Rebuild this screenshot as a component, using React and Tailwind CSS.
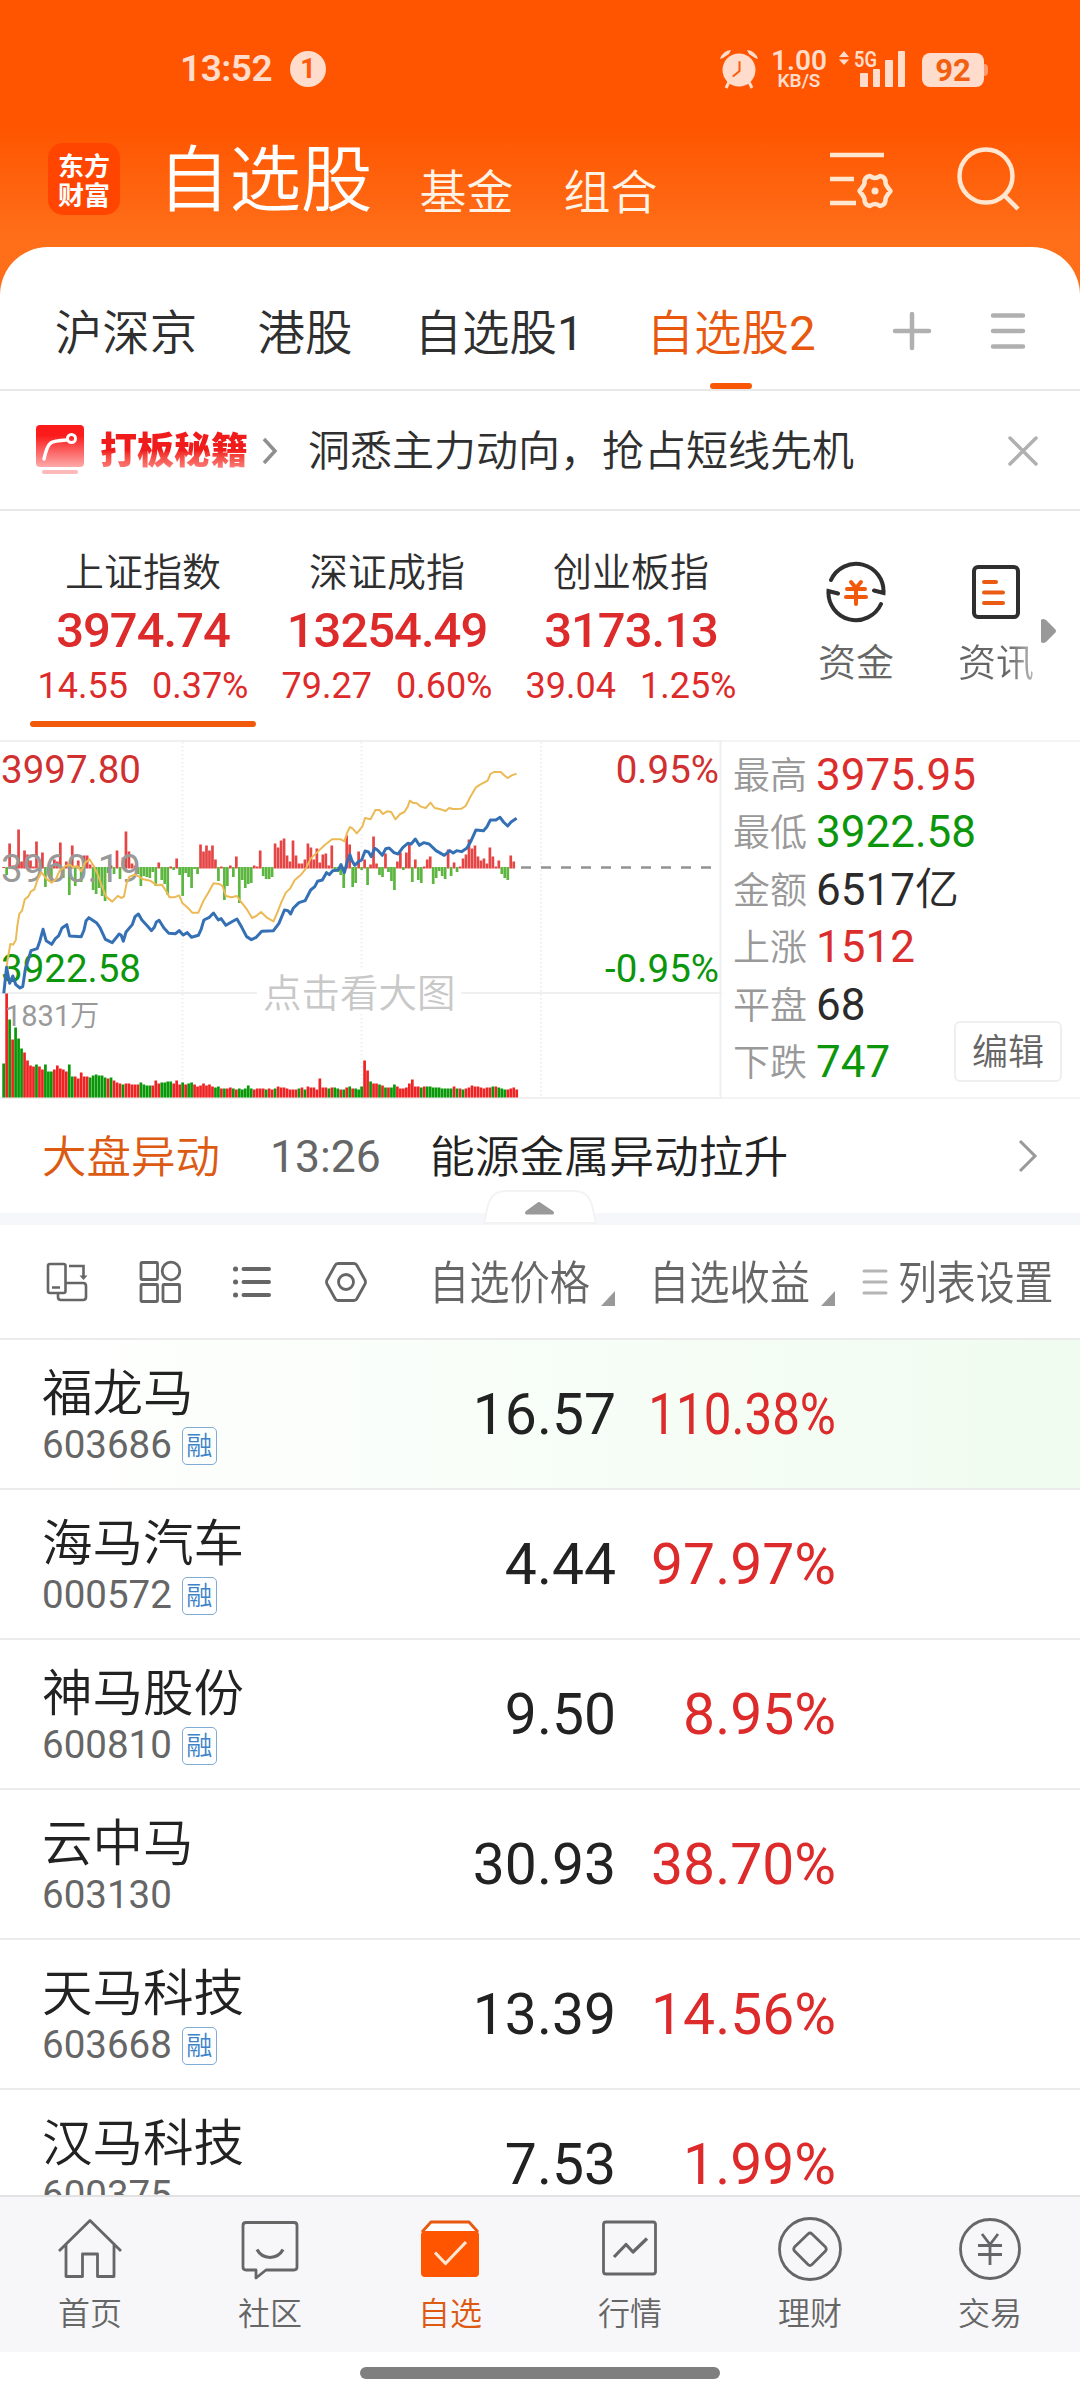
import clsx from 'clsx';

const TABS = [
    { label: '沪深京', box: 'w-[142px]' },
    { label: '港股', box: 'w-[96px]' },
    { label: '自选股', suffix: '1', box: 'w-[168px]' },
    { label: '自选股', suffix: '2', box: 'w-[168px]', active: true },
];

const INDEXES = [
    { name: '上证指数', value: '3974.74', diff: '14.55', pct: '0.37%', active: true },
    { name: '深证成指', value: '13254.49', diff: '79.27', pct: '0.60%' },
    { name: '创业板指', value: '3173.13', diff: '39.04', pct: '1.25%' },
];

const STATS = [
    { label: '最高', value: '3975.95', color: 'text-[#dc2d2d]' },
    { label: '最低', value: '3922.58', color: 'text-[#0b960b]' },
    { label: '金额', value: '6517', unit: '亿', color: 'text-[#2b2b2b]' },
    { label: '上涨', value: '1512', color: 'text-[#dc2d2d]' },
    { label: '平盘', value: '68', color: 'text-[#2b2b2b]' },
    { label: '下跌', value: '747', color: 'text-[#0b960b]' },
];

const STOCKS = [
    { name: '福龙马', code: '603686', margin: true, price: '16.57', pct: '110.38%', highlight: true },
    { name: '海马汽车', code: '000572', margin: true, price: '4.44', pct: '97.97%' },
    { name: '神马股份', code: '600810', margin: true, price: '9.50', pct: '8.95%' },
    { name: '云中马', code: '603130', margin: false, price: '30.93', pct: '38.70%' },
    { name: '天马科技', code: '603668', margin: true, price: '13.39', pct: '14.56%' },
    { name: '汉马科技', code: '600375', margin: false, price: '7.53', pct: '1.99%' },
];

// minute by minute strength around the zero line
const MOMENTUM = [
    0, -7, 24, 2, 1, 38, 6, 17, 13, 7, 1, 26, -3, 15, -19, -4, -15, 8, 6, 25, -10, 6, -27, 22, -18, 7, -14, 12, 12, 3,
    -22, -26, -20, -28, -33, -5, 2, -6, 17, -11, 10, 36, 16, 4, 2, -6, -18, -8, -9, -10, -4, -18, 5, -12, -16, -27, 1, -2, 9, -7,
    -28, -5, -9, -20, -1, -6, 23, 16, 22, 17, 22, 8, -13, 1, -32, -18, 2, -9, 11, -35, -12, -20, -16, -15, 2, 1, 17, -8, -11, -11,
    -9, 24, 20, 27, 29, 12, 6, 27, 12, 4, 4, 8, 24, 20, 8, 19, 5, 13, 14, 2, 22, -3, -4, -7, -20, 32, 23, -19, -15, 16,
    -2, 8, -17, 3, 31, 4, -7, -9, 14, -4, -13, -22, 6, 15, -2, 15, 23, -14, 8, -12, -15, 1, 8, 11, -16, -10, -3, -8, -11, 18,
    -8, 5, -4, 1, 9, 13, 28, 19, 22, 11, 7, 9, 4, 20, 11, 1, 7, -6, -10, -12, 12, 6,
];

// positive: up minute (red), negative: down minute (green)
const VOLUME = [
    -34, 104, -78, 58, -70, -59, -49, 45, 37, 32, 31, -33, 31, 28, -33, -26, -26, 28, 32, 29, 28, 26, -33, -21, 21, 19, 25, 21, 21, -20,
    -22, -23, -22, -22, -20, 19, -20, 17, 15, 14, -13, 14, 14, 13, 13, 13, -15, -13, -12, -12, 12, 17, 14, -15, -15, -16, -16, 14, 17, 13,
    -15, 13, -14, -15, 13, 11, 12, 14, 12, 13, 11, -10, -11, 9, -9, 9, 10, -9, 8, -9, -8, -9, -12, -9, 8, 9, 9, 9, -8, 9,
    8, -9, 11, 10, 10, 9, 8, 8, 8, -9, 10, -8, 11, 10, 10, 8, 19, 10, 10, -9, 10, -10, -9, 8, -8, 10, -11, 9, -9, -8,
    -11, 37, 27, -16, 14, 14, -13, 12, -10, 10, -10, -13, 11, 9, 9, 10, 14, 18, 11, 11, -10, 11, -11, -11, -10, -10, -10, -9, -9, -9,
    -9, 11, -9, 9, -8, 9, 10, 12, 11, 11, 10, 9, 10, 10, -11, 11, -10, -9, -8, 8, 9, 10, 8,
];

const PRICE_LINE =
    '11,790 19,712 28,760 37,738 46,764 58,774 66,770 74,715 82,690 90,662 108,656 116,632 125,598 134,632 150,643 160,627 170,618 180,594 194,584 202,618 236,620 244,600 250,572 258,563 280,578 290,592 306,628 326,638 346,612 352,616 358,634 366,606 384,584 392,560 402,552 412,570 430,590 440,602 448,592 454,576 462,571 476,594 490,610 510,611 520,602 532,615 544,608 556,622 576,616 584,598 592,570 608,562 620,549 634,570 642,566 656,586 672,576 688,567 702,592 716,620 730,629 744,622 760,604 794,602 810,580 826,540 836,542 844,552 852,534 868,518 886,512 902,480 914,470 922,454 936,450 948,428 956,434 966,422 982,420 990,404 1000,428 1008,396 1016,374 1022,392 1030,406 1042,394 1050,390 1060,363 1070,366 1078,380 1088,355 1096,360 1110,376 1120,356 1130,354 1144,368 1156,372 1170,352 1184,340 1194,342 1206,327 1218,346 1230,338 1246,342 1266,362 1290,376 1306,362 1316,369 1326,362 1340,365 1356,354 1368,332 1382,300 1404,302 1414,290 1424,270 1440,270 1452,262 1462,276 1474,288 1484,276 1500,265';

const AVERAGE_LINE =
    '19,712 22,690 30,642 38,644 46,630 50,590 56,552 64,542 72,508 82,500 90,484 100,478 108,452 120,426 134,446 150,458 162,448 172,424 190,408 202,404 212,412 224,408 236,424 246,400 260,388 272,408 284,434 296,468 308,500 326,515 342,498 352,504 360,500 368,458 376,440 392,434 404,440 416,448 436,452 456,466 470,464 484,486 492,502 506,502 520,496 530,520 546,534 558,548 576,548 590,514 606,486 620,460 636,462 646,468 656,498 672,502 688,498 700,516 718,540 732,564 744,558 758,546 776,564 794,574 806,546 818,514 830,488 842,476 856,450 874,434 888,416 902,386 920,368 942,346 964,328 990,328 1000,334 1008,308 1016,291 1024,296 1036,310 1052,290 1060,264 1076,268 1090,240 1102,240 1112,252 1124,244 1136,246 1148,268 1162,252 1174,246 1184,230 1190,212 1198,218 1210,220 1222,230 1236,234 1250,218 1262,234 1280,238 1294,243 1304,234 1316,237 1340,236 1352,228 1366,200 1382,172 1394,164 1416,152 1424,132 1434,126 1454,126 1464,136 1474,144 1486,136 1500,131';

function StatusBar() {
    return (
        <div className="flex h-[136px] items-start pl-[180px] pt-[50px] text-[#ffdccb]">
            <span className="w-[110px] text-[37px] font-semibold leading-[38px] tracking-[-0.5px]">13:52</span>
            <span className="mt-px flex size-9 items-center justify-center rounded-full bg-[#ffdccb] text-[27px] font-bold leading-none text-[#ff5a0a]">1</span>
            <svg className="ml-[394px]" width="38" height="40" viewBox="0 0 38 40" fill="currentColor">
                <path d="M0 9 A12 12 0 0 1 11 0 L9 4 L3 8Z M38 9 A12 12 0 0 0 27 0 L29 4 L35 8Z" />
                <circle cx="19" cy="20" r="16.5" />
                <path d="M9 32 L6 38 M29 32 L32 38" stroke="currentColor" strokeWidth="3" />
                <path d="M19.500 12 V21 L13.500 26" fill="none" stroke="#ff5a0a" strokeWidth="2" strokeLinecap="round" />
            </svg>
            <div className="ml-[13px] flex w-[56px] flex-col items-center font-semibold">
                <span className="text-[28px] leading-[22px]">1.00</span>
                <span className="text-[19px] leading-[18px]">KB/S</span>
            </div>
            <svg className="ml-[12px]" width="68" height="38" viewBox="0 0 68 38" fill="currentColor">
                <path d="M5 1 L10 7 H0Z M5 15 L10 9.500 H0Z" />
                <text x="15" y="16.500" fontSize="22" fontWeight="600" textLength="23" lengthAdjust="spacingAndGlyphs">5G</text>
                <rect x="21" y="23" width="8" height="14" rx="1" />
                <rect x="34" y="19" width="7" height="18" rx="1" />
                <rect x="46" y="10" width="8" height="27" rx="1" />
                <rect x="59" y="1" width="7" height="36" rx="1" />
            </svg>
            <div className="ml-[15px] mt-[3px] flex items-center">
                <span className="flex h-[34px] w-[62px] items-center justify-center rounded-[8px] bg-[#ffdccb] text-[31px] font-bold leading-none text-[#f2600f]">92</span>
                <span className="h-3 w-[4px] rounded-r bg-[#ff9b6c]" />
            </div>
        </div>
    );
}

function AppHeader() {
    return (
        <div className="flex h-[111px] items-start pl-12 text-white">
            <div className="mt-[7px] flex size-[72px] flex-col items-center justify-center rounded-[15px] bg-[#ff4500] font-['Noto_Sans_CJK_SC'] text-[26px] font-bold leading-[29px]">
                <span>东方</span>
                <span>财富</span>
            </div>
            <span className="ml-[38px] mt-[9px] text-[71.500px] leading-[72px]">自选股</span>
            <span className="ml-[47px] mt-[30px] text-[47px] leading-[54px] text-[#fff3e6]">基金</span>
            <span className="ml-[50px] mt-[30px] text-[47px] leading-[54px] text-[#fff3e6]">组合</span>
            <svg className="ml-[172px] mt-[14px]" width="64" height="60" viewBox="0 0 64 60" fill="none" stroke="#ffe6d0" strokeWidth="4.500">
                <path d="M0 5 H54 M0 29 H24 M0 53 H26" />
                <path
                    d="M40 26 Q45 30 50 26 Q56 27 55.500 33 Q56 35.500 60.500 41 Q56 46.500 55.500 49 Q56 55 50 56 Q45 52 40 56 Q34 55 34.500 49 Q34 46.500 29.500 41 Q34 35.500 34.500 33 Q34 27 40 26Z"
                    strokeLinejoin="round"
                />
                <circle cx="45" cy="41" r="3.500" fill="#ffe6d0" stroke="none" />
            </svg>
            <svg className="ml-[63px] mt-[11px]" width="64" height="64" viewBox="0 0 64 64" fill="none" stroke="#ffe6d0" strokeWidth="4.500">
                <circle cx="29" cy="29" r="26.500" />
                <path d="M47 48 L61 62" />
            </svg>
        </div>
    );
}

function GroupTabs() {
    return (
        <div className="flex h-[144px] items-stretch border-b-2 border-[#e8e8e8] pl-[55px] text-[47.5px] leading-none text-[#2f2f2f]">
            {TABS.map((tab, i) => (
                <div
                    key={i}
                    className={clsx('flex flex-col items-center', tab.box, i === 1 && 'ml-[60px]', i === 2 && 'ml-[62px]', i === 3 && 'ml-[64px]', tab.active && 'text-[#e8590f]')}
                >
                    <span className="mt-[64px] whitespace-nowrap">
                        {tab.label}
                        {tab.suffix && <span className="font-normal">{tab.suffix}</span>}
                    </span>
                    {tab.active && <span className="mb-0 mt-auto h-[6px] w-[42px] rounded-full bg-[#f95706]" />}
                </div>
            ))}
            <svg className="ml-[77px] mt-[64px]" width="40" height="40" viewBox="0 0 40 40" stroke="#b0b0b0" strokeWidth="4.500" strokeLinecap="round">
                <path d="M3 20 H37 M20 3 V37" />
            </svg>
            <svg className="ml-[57px] mt-[64px]" width="40" height="40" viewBox="0 0 40 40" stroke="#b0b0b0" strokeWidth="4.500" strokeLinecap="round">
                <path d="M4 4.500 H34 M4 20 H34 M4 35.500 H34" />
            </svg>
        </div>
    );
}

function PromoBanner() {
    return (
        <div className="flex h-[120px] items-center border-b-2 border-[#e8e8e8] pl-[36px] leading-none">
            <svg width="49" height="50" viewBox="0 0 49 50">
                <defs>
                    <linearGradient id="promo" x1="0" y1="0" x2="0" y2="1">
                        <stop offset="0.25" stopColor="#fb1b1b" />
                        <stop offset="1" stopColor="#fdaaaa" />
                    </linearGradient>
                </defs>
                <rect width="48" height="42" rx="4" fill="url(#promo)" />
                <rect x="6" y="45" width="36" height="4" rx="2" fill="#fbb9b9" />
                <path d="M8 34 C12 16 14 16 31 15" fill="none" stroke="#fff" strokeWidth="3.500" strokeLinecap="round" />
                <circle cx="35.500" cy="13.500" r="4" fill="none" stroke="#fff" strokeWidth="3" />
            </svg>
            <span className="ml-[15px] bg-gradient-to-b from-[#f01c1c] from-50% to-[#ff9090] bg-clip-text pb-1 pt-1.5 text-[37px] font-black text-transparent">打板秘籍</span>
            <svg className="ml-[13px] mt-[2px]" width="18" height="30" viewBox="0 0 18 30" fill="none" stroke="#8f8f8f" strokeWidth="3.500">
                <path d="M3 3 L14 15 L3 27" />
            </svg>
            <span className="ml-[29px] mt-[3px] w-[546px] whitespace-nowrap text-[42px] text-[#2f2f2f]">洞悉主力动向，抢占短线先机</span>
            <svg className="ml-[154px] mt-[2px]" width="30" height="32" viewBox="0 0 30 32" fill="none" stroke="#b0b0b0" strokeWidth="3.500" strokeLinecap="round">
                <path d="M2 3 L28 29 M28 3 L2 29" />
            </svg>
        </div>
    );
}

function IndexStrip() {
    return (
        <div className="flex h-[229px] pl-[21px]">
            {INDEXES.map((item) => (
                <div key={item.name} className="flex w-[244px] flex-col items-center whitespace-nowrap font-normal leading-none text-[#dd2a2a]">
                    <span className="mt-[43px] text-[39px] font-[350] text-[#2f2f2f]">{item.name}</span>
                    <span className="mt-[13px] text-[49px] font-medium tracking-[-1px]">{item.value}</span>
                    <span className="mt-[13px] flex gap-[24px] text-[36px]">
                        <span>{item.diff}</span>
                        <span>{item.pct}</span>
                    </span>
                    {item.active && <span className="mb-[13px] mt-auto h-[6px] w-[226px] rounded-full bg-[#f15a0c]" />}
                </div>
            ))}
            <div className="ml-[60px] flex w-[86px] flex-col items-center pt-[50px] text-[38px] leading-none text-[#666]">
                <svg width="62" height="62" viewBox="-31 -31 62 62" fill="none" stroke="#2f2f2f" strokeWidth="4" strokeLinecap="round">
                    <path d="M-25 -12 A27.500 27.500 0 0 1 27.500 1 L18 -1.500" />
                    <path d="M25 12 A27.500 27.500 0 0 1 -27.500 -1 L-18 1.500" />
                    <path d="M-5 -10 L0 -4 L5 -10 M-9 -3 H9 M-10 5 H10 M0 -4 V12" stroke="#f15a0c" />
                </svg>
                <span className="mt-[21px]">资金</span>
            </div>
            <div className="ml-[54px] flex w-[86px] flex-col items-center pt-[50px] text-[38px] leading-none">
                <svg width="50" height="62" viewBox="0 0 50 62" fill="none" stroke="#2f2f2f" strokeWidth="4" strokeLinecap="round">
                    <rect x="3" y="6" width="44" height="50" rx="4" />
                    <path d="M13 21 H25 M13 31.500 H32 M13 42 H32" stroke="#ea5b14" />
                </svg>
                <span className="mt-[21px] bg-gradient-to-r from-[#666] from-65% to-[#bbb] bg-clip-text pb-1 text-transparent">资讯</span>
            </div>
            <svg className="ml-[2px] mt-[107px]" width="16" height="26" viewBox="0 0 16 26" fill="#999">
                <path d="M0 2 Q2 0 5 2 L14 11 Q16 13 14 15 L5 24 Q2 26 0 24Z" />
            </svg>
        </div>
    );
}

function IntradayChart() {
    return (
        <svg className="shrink-0" width="722" height="359" viewBox="0 0 722 359">
            <g stroke="#f0f0f0" strokeWidth="2">
                <path d="M0 1 H722 M0 253 H722 M0 358 H722 M720.500 0 V358" />
                <path d="M182.500 2 V358 M361.500 2 V358 M541 2 V358" strokeDasharray="1.500 2.500" />
            </g>
            {MOMENTUM.map((v, i) => (
                <rect key={i} x={2.3 + i * 2.983} y={v > 0 ? 127.5 - v : 127} width="2.700" height={Math.abs(v) + 1} fill={v >= 0 ? '#e64545' : '#5cb63f'} />
            ))}
            {VOLUME.map((v, i) => (
                <rect key={i} x={2.3 + i * 2.983} y={357.5 - Math.abs(v)} width="2.700" height={Math.abs(v)} fill={v > 0 ? '#ee2424' : '#089808'} />
            ))}
            <path d="M521 127.500 H712" stroke="#929292" strokeWidth="2.500" strokeDasharray="10 10" />
            <g fontSize="38.500" fontWeight="400">
                <text x="1" y="43" fill="#d03030">3997.80</text>
                <text x="1" y="142" fill="#999">3960.19</text>
                <text x="1" y="242" fill="#0b960b">3922.58</text>
                <text x="719" y="43" textAnchor="end" fill="#d03030">0.95%</text>
                <text x="719" y="242" textAnchor="end" fill="#0b960b">-0.95%</text>
            </g>
            <text x="5" y="286" fontSize="29" fill="#999">
                <tspan fontWeight="400">1831</tspan>万
            </text>
            <g transform="scale(0.3444 0.3333) translate(0 -30)" fill="none" strokeLinejoin="round">
                <polyline points={AVERAGE_LINE} stroke="#ecba54" strokeWidth="2" vectorEffect="non-scaling-stroke" />
                <polyline points={PRICE_LINE} stroke="#3570b5" strokeWidth="3" vectorEffect="non-scaling-stroke" />
            </g>
            <rect x="257" y="230" width="204" height="44" fill="#fff" />
            <text x="263" y="267" fontSize="38.500" fill="#c8c8c8">点击看大图</text>
        </svg>
    );
}

function MarketPanel() {
    return (
        <div className="flex h-[359px]">
            <IntradayChart />
            <div className="relative flex flex-1 flex-col border-y-2 border-[#f4f4f4] pl-[11px] pt-[4px]">
                {STATS.map((row) => (
                    <div key={row.label} className="flex h-[57.500px] items-center leading-none">
                        <span className="mt-[3px] w-[83px] text-[37px] text-[#999]">{row.label}</span>
                        <span className={clsx('text-[44px] font-normal', row.color)}>
                            {row.value}
                            {row.unit && <span className="font-[350]">{row.unit}</span>}
                        </span>
                    </div>
                ))}
                <button className="absolute bottom-[15px] right-[18px] flex h-[61px] w-[108px] items-center justify-center rounded-[6px] border-2 border-[#efefef] bg-white pt-[2px] text-[36px] leading-none text-[#666]">
                    编辑
                </button>
            </div>
        </div>
    );
}

function MarketNews() {
    return (
        <div className="relative h-[126px] border-b-[12px] border-[#f6f7fa]">
            <div className="flex h-[114px] items-center whitespace-nowrap pl-[42px] text-[44.500px] leading-none">
                <span className="mt-[4px] w-[228px] text-[#dd5a13]">大盘异动</span>
                <span className="mt-[2px] w-[160px] font-normal text-[#666]">13:26</span>
                <span className="mt-[4px] w-[587px] text-[44.800px] text-[#222]">能源金属异动拉升</span>
                <svg width="22" height="36" viewBox="0 0 22 36" fill="none" stroke="#999" strokeWidth="3">
                    <path d="M3 3 L18 18 L3 33" />
                </svg>
            </div>
            <svg className="absolute left-[482px] top-[90px]" width="116" height="36" viewBox="0 0 116 36">
                <path d="M2 34 L6 16 Q10 2 24 2 H92 Q106 2 110 16 L114 34Z" fill="#fff" stroke="#f3f3f5" strokeWidth="2" />
                <path d="M44 25.500 Q42 24 44 22 L55 14 Q57 12 59 14 L71 22 Q73 24 71 25.500Z" fill="#999" />
            </svg>
        </div>
    );
}

function SortLabel({ children, box }) {
    return (
        <div className={clsx('relative flex items-center', box)}>
            <span className="origin-left scale-x-[0.875] whitespace-nowrap pt-[2px] text-[46px]">{children}</span>
            <svg className="absolute bottom-[32px] right-0" width="14" height="15" viewBox="0 0 14 15" fill="#999">
                <path d="M14 0 V15 H0Z" />
            </svg>
        </div>
    );
}

function ListToolbar() {
    return (
        <div className="flex h-[115px] items-center border-b-2 border-[#ebebeb] pl-[45px] leading-none text-[#666]">
            <svg className="shrink-0" width="44" height="44" viewBox="0 0 44 44" fill="none" stroke="currentColor" strokeWidth="2.600">
                <rect x="3" y="4" width="17.500" height="29" rx="2" />
                <path d="M7 27.500 H15 M24 6 H38.500 V17 M13 34 V37 Q13 40 16 40 H38 Q41 40 41 37 V26 Q41 23 38 23 H21" />
                <path d="M34.500 15.500 H42.500 L38.500 20Z" fill="currentColor" stroke="none" />
            </svg>
            <svg className="ml-[49px] shrink-0" width="44" height="44" viewBox="0 0 44 44" fill="none" stroke="currentColor" strokeWidth="2.800">
                <rect x="3" y="2.500" width="16.500" height="17" rx="1" />
                <circle cx="33" cy="11" r="8.800" />
                <rect x="3" y="24.500" width="16.500" height="17" rx="1" />
                <rect x="25" y="24.500" width="16.500" height="17" rx="1" />
            </svg>
            <svg className="ml-[49px] shrink-0" width="44" height="44" viewBox="0 0 44 44" stroke="currentColor" strokeWidth="4" strokeLinecap="round">
                <path d="M12.500 9 H38 M12.500 22 H38 M12.500 35 H38" />
                <path d="M4.500 9 h.1 M4.500 22 h.1 M4.500 35 h.1" strokeWidth="5" />
            </svg>
            <svg className="ml-[49px] shrink-0" width="44" height="44" viewBox="0 0 44 44" fill="none" stroke="currentColor" strokeWidth="2.800">
                <path d="M14 3.500 H30 Q32 3.500 33 5.500 L41 20 Q42 22 41 24 L33 38.500 Q32 40.500 30 40.500 H14 Q12 40.500 11 38.500 L3 24 Q2 22 3 20 L11 5.500 Q12 3.500 14 3.500Z" />
                <circle cx="22" cy="22" r="7.500" />
            </svg>
            <div className="ml-[61px] flex h-full shrink-0">
                <SortLabel box="w-[186px]">自选价格</SortLabel>
                <SortLabel box="ml-[34px] w-[186px]">自选收益</SortLabel>
            </div>
            <svg className="ml-[27px] shrink-0" width="27" height="28" viewBox="0 0 27 28" stroke="#b5b5b5" strokeWidth="3" strokeLinecap="round">
                <path d="M2 3 H24 M2 14 H24 M2 25 H24" />
            </svg>
            <span className="ml-[9px] w-[160px] origin-left scale-x-[0.845] whitespace-nowrap pt-[2px] text-[46px]">列表设置</span>
        </div>
    );
}

function StockRow({ stock }) {
    const squeezed = stock.pct.length > 6;
    return (
        <div className={clsx('flex h-[150px] shrink-0 border-b-2 border-[#ebebeb] font-normal leading-none', stock.highlight && 'bg-gradient-to-r from-white to-[#f0fcf0]')}>
            <div className="flex w-[316px] flex-col pl-[42px]">
                <span className="mt-[29px] text-[50.500px] font-[350] text-[#222]">{stock.name}</span>
                <div className="mt-[7px] flex h-[38px] items-center">
                    <span className="text-[38.500px] text-[#666]">{stock.code}</span>
                    {stock.margin && (
                        <span className="ml-[10px] flex h-[38px] w-[35px] items-center justify-center rounded-[5px] border-[1.500px] border-[#7fabd6] text-[26px] font-[350] text-[#3d83c8]">融</span>
                    )}
                </div>
            </div>
            <span className="mt-[46px] w-[300px] text-right text-[57px] text-[#222]">{stock.price}</span>
            <span className="mt-[46px] flex w-[220px] justify-end text-[57px] text-[#dd2a2a]">
                <span className={clsx('origin-right', squeezed && 'scale-x-[0.865]')}>{stock.pct}</span>
            </span>
        </div>
    );
}

function NavIcon({ name }) {
    const props = { width: 66, height: 66, viewBox: '0 0 66 66', fill: 'none', stroke: '#666', strokeWidth: 2.8, strokeLinejoin: 'round' };
    if (name === 'home') {
        return (
            <svg {...props}>
                <path d="M2 35 L33 4.500 L64 35 M9 29 V60.500 H25.500 V38 H40.500 V60.500 H57 V29" />
            </svg>
        );
    }
    if (name === 'community') {
        return (
            <svg {...props}>
                <path d="M9 6.500 H57 Q60 6.500 60 9.500 V51 Q60 54 57 54 H29 L19 62 V54 H9 Q6 54 6 51 V9.500 Q6 6.500 9 6.500Z" />
                <path d="M20 33.500 Q24 41 33 41.500 Q42 41 46 33.500" strokeWidth="3.200" />
            </svg>
        );
    }
    if (name === 'watchlist') {
        return (
            <svg {...props} stroke="#e8590f">
                <path d="M5 16 L14 6 H52 L61 16" fill="#fff" />
                <rect x="4" y="15" width="58" height="46" rx="4" fill="#ff5500" stroke="none" />
                <path d="M18 36.500 L28.500 47.500 L49 26" stroke="#ffe6d0" strokeWidth="3.200" />
            </svg>
        );
    }
    if (name === 'quotes') {
        return (
            <svg {...props}>
                <rect x="6.500" y="6" width="52" height="52" rx="2.500" />
                <path d="M17 41 L29 28.500 L36 36 L50 22.500" strokeWidth="3.200" />
            </svg>
        );
    }
    if (name === 'wealth') {
        return (
            <svg {...props}>
                <circle cx="33" cy="33" r="30.500" />
                <path d="M31 18 Q33 16 35 18 L48.500 31 Q50 33 48.500 35 L35 48.500 Q33 50.500 31 48.500 L17.500 35 Q16 33 17.500 31Z" />
            </svg>
        );
    }
    return (
        <svg {...props}>
            <circle cx="33" cy="33" r="29.500" />
            <path d="M25 18 L33 28.500 L41 18 M21 29.500 H45 M21 38.500 H45 M33 28.500 V49" />
        </svg>
    );
}

const NAV = [
    { icon: 'home', label: '首页' },
    { icon: 'community', label: '社区' },
    { icon: 'watchlist', label: '自选', active: true },
    { icon: 'quotes', label: '行情' },
    { icon: 'wealth', label: '理财' },
    { icon: 'trade', label: '交易' },
];

function BottomNav() {
    return (
        <div className="grid h-[157px] shrink-0 grid-cols-6 border-t-2 border-[#e2e2e2] bg-[#f7f7fa]">
            {NAV.map((item) => (
                <div key={item.label} className="flex flex-col items-center pt-[19px] leading-none">
                    <NavIcon name={item.icon} />
                    <span className={clsx('mt-[16px] text-[32px]', item.active ? 'text-[#dd5a13]' : 'text-[#666]')}>{item.label}</span>
                </div>
            ))}
        </div>
    );
}

export default function App() {
    return (
        <div className="flex h-[2400px] w-[1080px] flex-col overflow-hidden bg-white font-[Roboto,'Noto_Sans_CJK_SC',sans-serif] font-[350]">
            <div className="h-[300px] shrink-0 bg-[linear-gradient(180deg,#ff5500_0px,#ff5500_126px,#ff6f1a_240px,#ff6f1a_300px)]">
                <StatusBar />
                <AppHeader />
            </div>
            <main className="-mt-[53px] flex h-[1948px] shrink-0 flex-col overflow-hidden rounded-t-[48px] bg-white">
                <div className="shrink-0">
                    <GroupTabs />
                    <PromoBanner />
                    <IndexStrip />
                    <MarketPanel />
                    <MarketNews />
                    <ListToolbar />
                </div>
                {STOCKS.map((stock) => (
                    <StockRow key={stock.code} stock={stock} />
                ))}
            </main>
            <BottomNav />
            <div className="flex justify-center pt-[15px]">
                <span className="h-3 w-[360px] rounded-full bg-[#7f7f7f]" />
            </div>
        </div>
    );
}
